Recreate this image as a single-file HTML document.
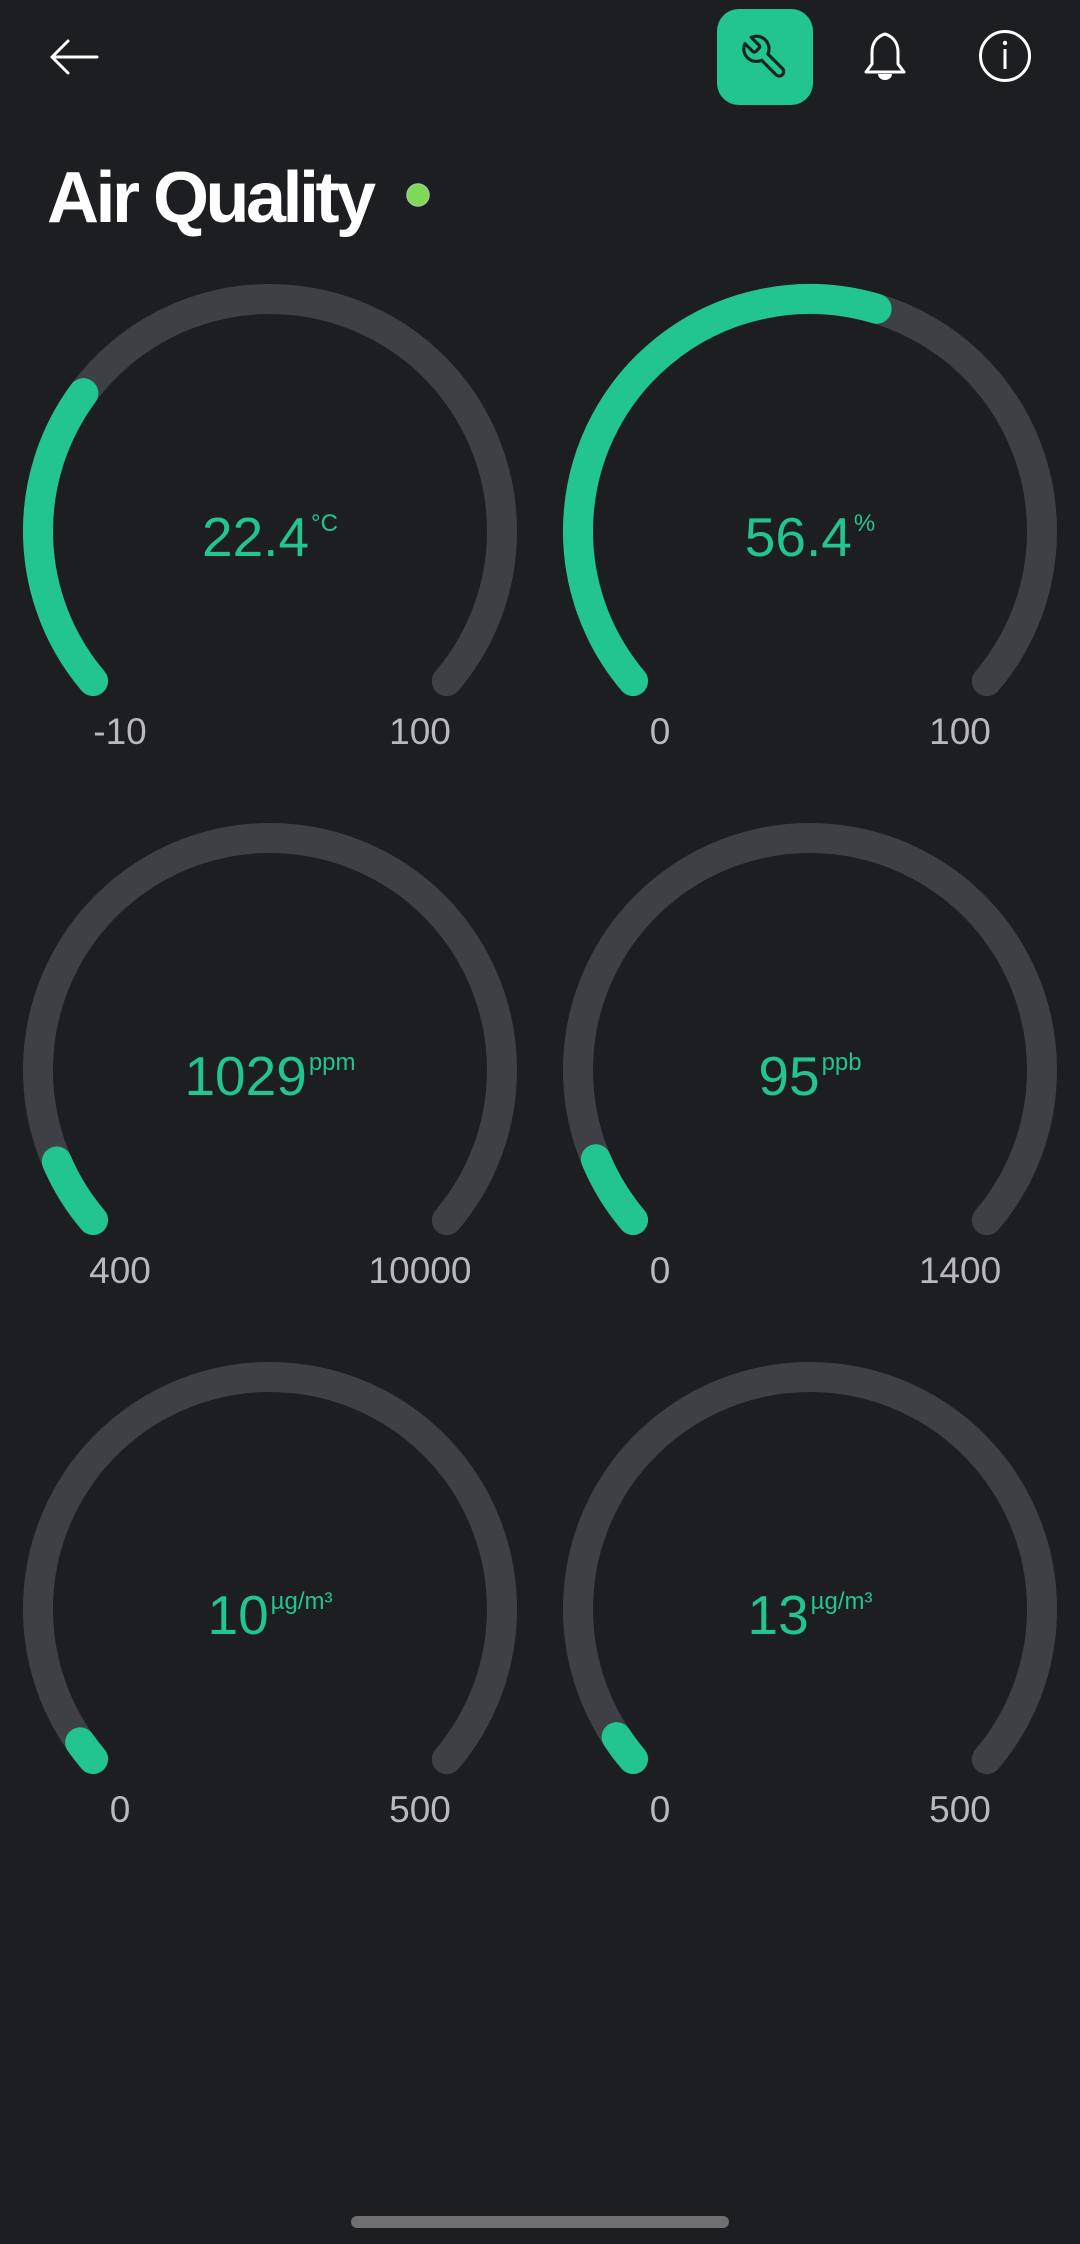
<!DOCTYPE html>
<html><head><meta charset="utf-8"><style>
html,body{margin:0;padding:0;background:#1d1e21;}
body{width:1080px;height:2244px;position:relative;overflow:hidden;font-family:"Liberation Sans",sans-serif;}
.abs{position:absolute;}
.val{position:absolute;width:400px;text-align:center;color:#22c58f;font-size:55px;line-height:1;white-space:nowrap;}
.val sup{font-size:24px;vertical-align:top;position:relative;top:2px;margin-left:2px;}
.lbl{position:absolute;width:200px;text-align:center;color:#b8b8bd;font-size:37px;line-height:1;}
</style></head><body>
<svg class="abs" style="left:0;top:0" width="1080" height="2244">
  <g stroke="#fff" stroke-width="3" fill="none" stroke-linecap="round" stroke-linejoin="round">
    <path d="M52 57 H97 M68 41 L52 57 L68 73"/>
  </g>
  <rect x="717" y="9" width="96" height="96" rx="22" fill="#22c58f"/>
  <g transform="translate(790,32) scale(-2.1,2.1)" fill="none" stroke="#16261f" stroke-width="1.5" stroke-linecap="round" stroke-linejoin="round">
    <path d="M14.7 6.3a1 1 0 0 0 0 1.4l1.6 1.6a1 1 0 0 0 1.4 0l3.77-3.77a6 6 0 0 1-7.94 7.94l-6.91 6.91a2.12 2.12 0 0 1-3-3l6.91-6.91a6 6 0 0 1 7.94-7.94l-3.76 3.76z"/>
  </g>
  <g fill="none" stroke="#fff" stroke-width="3" stroke-linejoin="round">
    <path d="M866 72 L872 64 V52 C872 42 878 36 885 34 C892 36 898 42 898 52 V64 L904 72 Z"/>
  </g>
  <path d="M878 74 H892 A7 6 0 0 1 878 74 Z" fill="#fff"/>
  <circle cx="1005" cy="56" r="24.5" fill="none" stroke="#fff" stroke-width="3"/>
  <circle cx="1005" cy="43" r="2.2" fill="#fff"/>
  <rect x="1003.5" y="49" width="3" height="20" fill="#fff"/>
  <circle cx="418" cy="195" r="11" fill="#7ed957" stroke="#a5c79a" stroke-width="1.5"/>
  <g fill="none" stroke-width="30" stroke-linecap="round">
    <g transform="translate(270,531) rotate(139.7)">
      <circle r="232" stroke="#3f4045" stroke-dasharray="1055.2 2000"/>
      <circle r="232" stroke="#22c58f" stroke-dasharray="310.7 2000"/>
    </g>
    <g transform="translate(810,531) rotate(139.7)">
      <circle r="232" stroke="#3f4045" stroke-dasharray="1055.2 2000"/>
      <circle r="232" stroke="#22c58f" stroke-dasharray="595.1 2000"/>
    </g>
    <g transform="translate(270,1070) rotate(139.7)">
      <circle r="232" stroke="#3f4045" stroke-dasharray="1055.2 2000"/>
      <circle r="232" stroke="#22c58f" stroke-dasharray="69.1 2000"/>
    </g>
    <g transform="translate(810,1070) rotate(139.7)">
      <circle r="232" stroke="#3f4045" stroke-dasharray="1055.2 2000"/>
      <circle r="232" stroke="#22c58f" stroke-dasharray="71.6 2000"/>
    </g>
    <g transform="translate(270,1609) rotate(139.7)">
      <circle r="232" stroke="#3f4045" stroke-dasharray="1055.2 2000"/>
      <circle r="232" stroke="#22c58f" stroke-dasharray="21.1 2000"/>
    </g>
    <g transform="translate(810,1609) rotate(139.7)">
      <circle r="232" stroke="#3f4045" stroke-dasharray="1055.2 2000"/>
      <circle r="232" stroke="#22c58f" stroke-dasharray="27.4 2000"/>
    </g>
  </g>
  <rect x="351" y="2216" width="378" height="12" rx="6" fill="#707072"/>
</svg>

<div class="abs" style="left:47px;top:162px;color:#fff;font-weight:bold;font-size:72px;letter-spacing:-3.5px;line-height:1;">Air Quality</div>

<div class="val" style="left:70px;top:510px;">22.4<sup>°C</sup></div>
<div class="val" style="left:610px;top:510px;">56.4<sup>%</sup></div>
<div class="val" style="left:70px;top:1049px;">1029<sup>ppm</sup></div>
<div class="val" style="left:610px;top:1049px;">95<sup>ppb</sup></div>
<div class="val" style="left:70px;top:1588px;">10<sup>µg/m³</sup></div>
<div class="val" style="left:610px;top:1588px;">13<sup>µg/m³</sup></div>

<div class="lbl" style="left:20px;top:713px;">-10</div>
<div class="lbl" style="left:320px;top:713px;">100</div>
<div class="lbl" style="left:560px;top:713px;">0</div>
<div class="lbl" style="left:860px;top:713px;">100</div>
<div class="lbl" style="left:20px;top:1252px;">400</div>
<div class="lbl" style="left:320px;top:1252px;">10000</div>
<div class="lbl" style="left:560px;top:1252px;">0</div>
<div class="lbl" style="left:860px;top:1252px;">1400</div>
<div class="lbl" style="left:20px;top:1791px;">0</div>
<div class="lbl" style="left:320px;top:1791px;">500</div>
<div class="lbl" style="left:560px;top:1791px;">0</div>
<div class="lbl" style="left:860px;top:1791px;">500</div>
</body></html>
